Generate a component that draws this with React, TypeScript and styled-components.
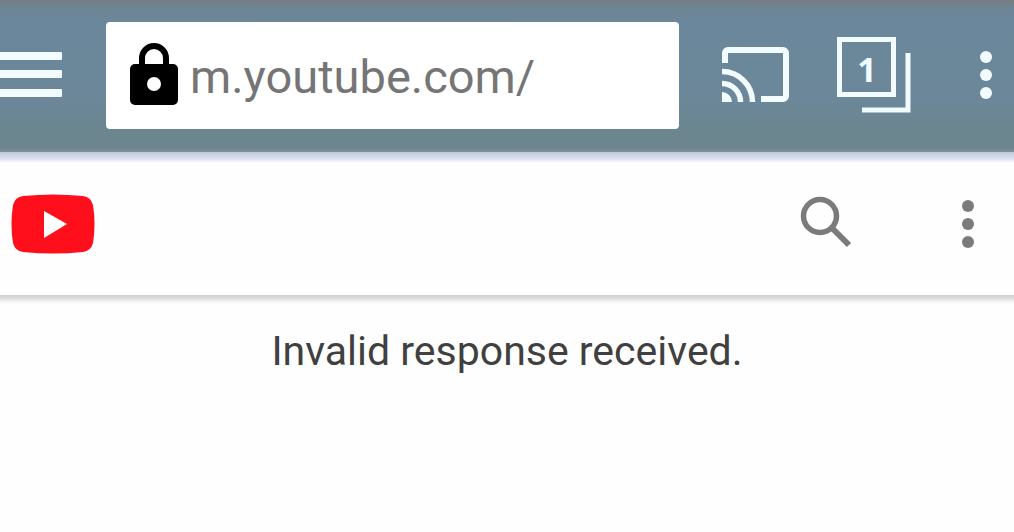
import React from "react";
import styled, { createGlobalStyle } from "styled-components";

const GlobalStyle = createGlobalStyle`
  *, *::before, *::after { box-sizing: border-box; }
  body {
    margin: 0;
    background: #fefefe;
    font-family: Roboto, "Liberation Sans", sans-serif;
  }
`;

const BrowserBar = styled.header`
  display: flex;
  align-items: center;
  height: 152px;
  padding: 0 21px 2px 0;
  background: linear-gradient(
    to bottom,
    #777f83 0,
    #6e8593 8px,
    #6b879b 22px,
    #6b8799 100px,
    #6c868f 132px,
    #6c858e 148px,
    #8090a0 152px
  );
`;

const IconButton = styled.button<{ $width: number; $color?: string }>`
  flex: none;
  display: flex;
  align-items: center;
  width: ${({ $width }) => $width}px;
  height: 76px;
  padding: 0;
  border: 0;
  background: none;
  color: ${({ $color }) => $color ?? "#f2fbff"};
  cursor: pointer;

  svg {
    display: block;
    flex: none;
  }
`;

const AddressField = styled.label`
  flex: 1;
  min-width: 0;
  display: flex;
  align-items: center;
  gap: 12px;
  height: 107px;
  margin: 0 43px 0 44px;
  padding: 0 16px 0 24px;
  border-radius: 4px;
  background: #fff;

  svg {
    flex: none;
  }
`;

const AddressInput = styled.input`
  flex: 1;
  min-width: 0;
  height: 60px;
  padding: 2px 0 0;
  border: 0;
  outline: 0;
  background: none;
  color: #757575;
  font-family: inherit;
  font-size: 47px;
  line-height: 58px;
`;

const BrowserActions = styled.div`
  flex: none;
  display: flex;
  align-items: center;
  gap: 48px;
`;

const MenuSlot = styled.div`
  padding-left: 20px;
`;

const SiteBar = styled.header`
  display: flex;
  align-items: center;
  height: 143px;
  padding: 0 39px 0 11px;
  background: linear-gradient(to bottom, #bfc8d8 0, #dde3f0 7px, #fefefe 11px);
`;

const SiteLogo = styled.a`
  display: block;
  margin-right: auto;

  svg {
    display: block;
  }
`;

const SiteActions = styled.div`
  display: flex;
  align-items: center;
  gap: 109px;
`;

const Content = styled.main`
  padding: 28px 16px;
  background: linear-gradient(to bottom, #d2d2d2 0, #d9d9d9 3px, #f6f6f6 7px, #fefefe 10px);
`;

const Message = styled.p`
  margin: 0;
  color: #404040;
  font-size: 41px;
  line-height: 56px;
  text-align: center;
`;

const HamburgerIcon = () => (
  <svg width="62" height="46" viewBox="0 0 62 46" fill="currentColor" aria-hidden="true">
    <rect x="-4" y="0" width="66" height="8" rx="1" />
    <rect x="-4" y="18" width="66" height="8" rx="1" />
    <rect x="-4" y="37" width="66" height="8" rx="1" />
  </svg>
);

const LockIcon = () => (
  <svg width="48" height="64" viewBox="0 0 48 64" aria-hidden="true">
    <path d="M12 25V15a12 12 0 0 1 24 0v10" fill="none" stroke="#000" strokeWidth="6" />
    <rect x="0" y="21" width="48" height="41" rx="5" fill="#000" />
    <circle cx="24" cy="41" r="7" fill="#fff" />
  </svg>
);

const CastIcon = () => (
  <svg width="67" height="56" viewBox="0 0 67 56" fill="none" stroke="currentColor" strokeWidth="6" aria-hidden="true">
    <path d="M3 16V6a3 3 0 0 1 3-3H61a3 3 0 0 1 3 3V49a3 3 0 0 1-3 3H39" />
    <path d="M0 24.5A30.5 30.5 0 0 1 30.5 55" strokeWidth="5.5" />
    <path d="M0 36.5A18.5 18.5 0 0 1 18.5 55" strokeWidth="5.5" />
    <path d="M0 45A10 10 0 0 1 10 55H0Z" fill="currentColor" stroke="none" />
  </svg>
);

const TabsIcon = () => (
  <svg width="74" height="76" viewBox="0 0 74 76" fill="none" stroke="currentColor" aria-hidden="true">
    <rect x="2.5" y="2.5" width="54" height="55" strokeWidth="5" />
    <path d="M71 16V73H25" strokeWidth="5" />
    <text
      x="30"
      y="45"
      textAnchor="middle"
      fill="currentColor"
      stroke="none"
      fontFamily="Open Sans, sans-serif"
      fontSize="34"
      fontWeight="700"
    >
      1
    </text>
  </svg>
);

const MoreIcon = () => (
  <svg width="14" height="50" viewBox="0 0 14 50" fill="currentColor" aria-hidden="true">
    <circle cx="7" cy="7" r="6" />
    <circle cx="7" cy="25" r="6" />
    <circle cx="7" cy="43" r="6" />
  </svg>
);

const PlayLogo = () => (
  <svg width="84" height="60" viewBox="0 0 84 60" aria-hidden="true">
    <path
      d="M12 2Q42-1 72 2Q80 3 82 11Q85 30 82 49Q80 57 72 58Q42 61 12 58Q4 57 2 49Q-1 30 2 11Q4 3 12 2Z"
      fill="#ff0f1b"
    />
    <path d="M33 17V44L56 30Z" fill="#fff" />
  </svg>
);

const SearchIcon = () => (
  <svg width="52" height="56" viewBox="0 0 52 56" fill="none" stroke="currentColor" aria-hidden="true">
    <circle cx="20" cy="20" r="16.5" strokeWidth="5.5" />
    <path d="M31 31L49 49" strokeWidth="6" />
  </svg>
);

export default function App() {
  return (
    <>
      <GlobalStyle />
      <BrowserBar>
        <IconButton type="button" $width={62} aria-label="Menu">
          <HamburgerIcon />
        </IconButton>
        <AddressField>
          <LockIcon />
          <AddressInput type="text" aria-label="Address" defaultValue="m.youtube.com/" />
        </AddressField>
        <BrowserActions>
          <IconButton type="button" $width={67} aria-label="Cast">
            <CastIcon />
          </IconButton>
          <IconButton type="button" $width={74} aria-label="Open tabs">
            <TabsIcon />
          </IconButton>
          <MenuSlot>
            <IconButton type="button" $width={14} aria-label="Browser options">
              <MoreIcon />
            </IconButton>
          </MenuSlot>
        </BrowserActions>
      </BrowserBar>
      <SiteBar>
        <SiteLogo href="#" aria-label="YouTube home">
          <PlayLogo />
        </SiteLogo>
        <SiteActions>
          <IconButton type="button" $width={52} $color="#7b7b7b" aria-label="Search">
            <SearchIcon />
          </IconButton>
          <IconButton type="button" $width={14} $color="#7b7b7b" aria-label="Site options">
            <MoreIcon />
          </IconButton>
        </SiteActions>
      </SiteBar>
      <Content>
        <Message>Invalid response received.</Message>
      </Content>
    </>
  );
}
